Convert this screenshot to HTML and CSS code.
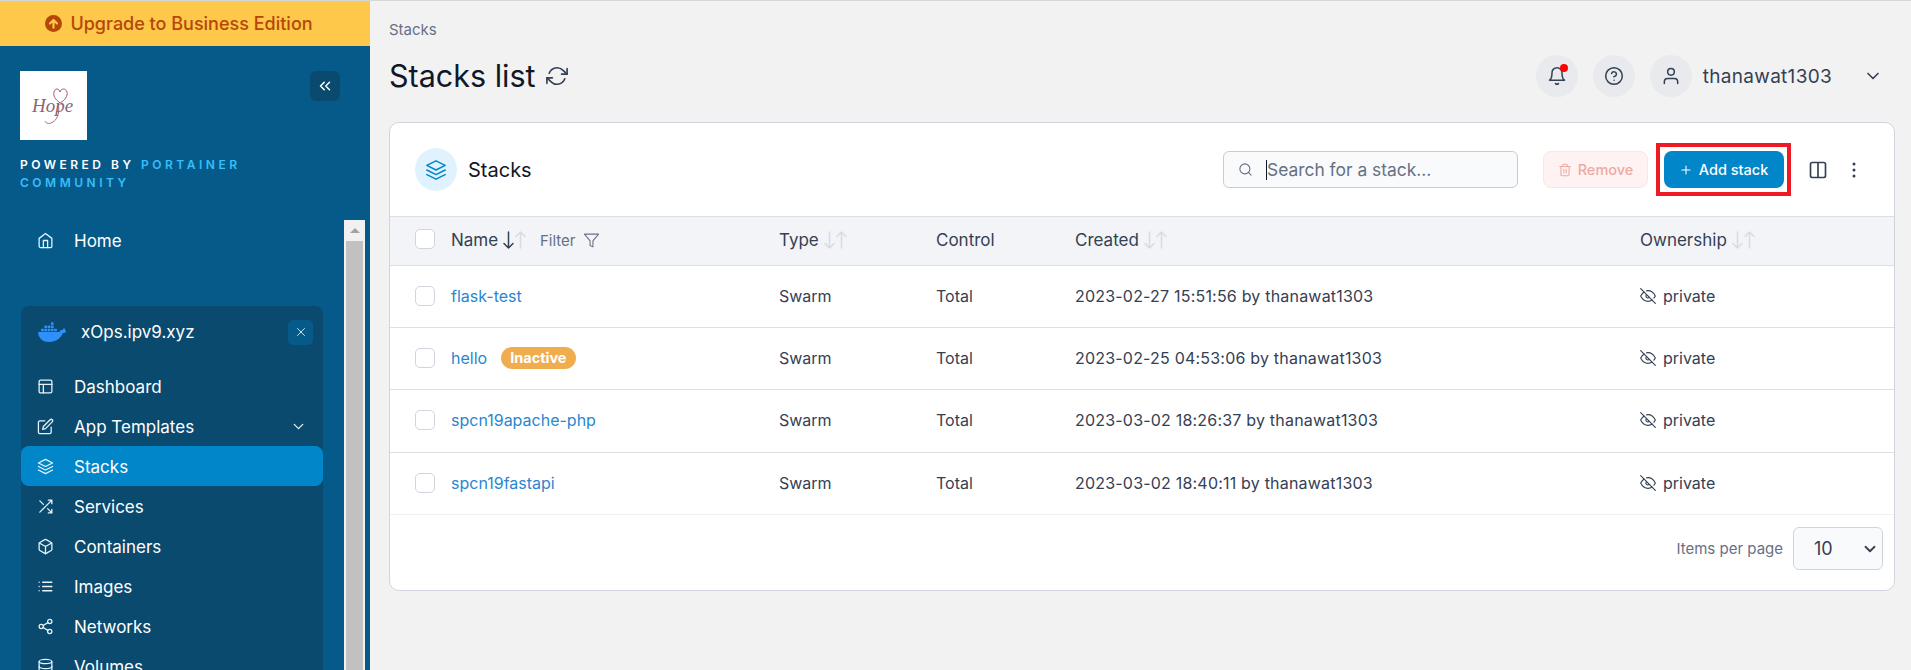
FILE: index.html
```html
<!DOCTYPE html>
<html lang="en">
<head>
<meta charset="utf-8">
<title>Stacks list</title>
<link rel="stylesheet" href="styles.css">
</head>
<body>
<svg class="sprite" width="0" height="0" aria-hidden="true">
  <symbol id="i-home" viewBox="0 0 24 24"><path d="M3 9l9-7 9 7v11a2 2 0 0 1-2 2H5a2 2 0 0 1-2-2z"/><path d="M9 22V12h6v10"/></symbol>
  <symbol id="i-layout" viewBox="0 0 24 24"><rect x="3" y="3" width="18" height="18" rx="2"/><path d="M3 9h18M9 21V9"/></symbol>
  <symbol id="i-edit" viewBox="0 0 24 24"><path d="M11 4H4a2 2 0 0 0-2 2v14a2 2 0 0 0 2 2h14a2 2 0 0 0 2-2v-7"/><path d="M18.5 2.500a2.121 2.121 0 0 1 3 3L12 15l-4 1 1-4 9.500-9.500z"/></symbol>
  <symbol id="i-layers" viewBox="0 0 24 24"><path d="M12 2 2 7l10 5 10-5-10-5z"/><path d="M2 17l10 5 10-5"/><path d="M2 12l10 5 10-5"/></symbol>
  <symbol id="i-shuffle" viewBox="0 0 24 24"><path d="M16 3h5v5M4 20 21 3M21 16v5h-5M15 15l6 6M4 4l5 5"/></symbol>
  <symbol id="i-box" viewBox="0 0 24 24"><path d="M21 16V8a2 2 0 0 0-1-1.730l-7-4a2 2 0 0 0-2 0l-7 4A2 2 0 0 0 3 8v8a2 2 0 0 0 1 1.730l7 4a2 2 0 0 0 2 0l7-4A2 2 0 0 0 21 16z"/><path d="M3.270 6.960 12 12.010l8.730-5.050M12 22.080V12"/></symbol>
  <symbol id="i-list" viewBox="0 0 24 24"><path d="M8 6h13M8 12h13M8 18h13M3 6h.01M3 12h.01M3 18h.01"/></symbol>
  <symbol id="i-share" viewBox="0 0 24 24"><circle cx="18" cy="5" r="3"/><circle cx="6" cy="12" r="3"/><circle cx="18" cy="19" r="3"/><path d="M8.590 13.510l6.830 3.980M15.410 6.510l-6.820 3.980"/></symbol>
  <symbol id="i-db" viewBox="0 0 24 24"><ellipse cx="12" cy="5" rx="9" ry="3"/><path d="M21 12c0 1.660-4 3-9 3s-9-1.340-9-3"/><path d="M3 5v14c0 1.660 4 3 9 3s9-1.340 9-3V5"/></symbol>
  <symbol id="i-refresh" viewBox="0 0 24 24"><path d="M23 4v6h-6M1 20v-6h6"/><path d="M3.510 9a9 9 0 0 1 14.850-3.360L23 10M1 14l4.640 4.360A9 9 0 0 0 20.490 15"/></symbol>
  <symbol id="i-bell" viewBox="0 0 24 24"><path d="M18 8A6 6 0 0 0 6 8c0 7-3 9-3 9h18s-3-2-3-9"/><path d="M13.730 21a2 2 0 0 1-3.460 0"/></symbol>
  <symbol id="i-help" viewBox="0 0 24 24"><circle cx="12" cy="12" r="10"/><path d="M9.090 9a3 3 0 0 1 5.830 1c0 2-3 3-3 3M12 17h.01"/></symbol>
  <symbol id="i-user" viewBox="0 0 24 24"><path d="M20 21v-2a4 4 0 0 0-4-4H8a4 4 0 0 0-4 4v2"/><circle cx="12" cy="7" r="4"/></symbol>
  <symbol id="i-search" viewBox="0 0 24 24"><circle cx="11" cy="11" r="8"/><path d="M21 21l-4.350-4.350"/></symbol>
  <symbol id="i-trash" viewBox="0 0 24 24"><path d="M3 6h18M19 6v14a2 2 0 0 1-2 2H7a2 2 0 0 1-2-2V6m3 0V4a2 2 0 0 1 2-2h4a2 2 0 0 1 2 2v2M10 11v6M14 11v6"/></symbol>
  <symbol id="i-plus" viewBox="0 0 24 24"><path d="M12 5v14M5 12h14"/></symbol>
  <symbol id="i-columns" viewBox="0 0 24 24"><path d="M12 3H5a2 2 0 0 0-2 2v14a2 2 0 0 0 2 2h14a2 2 0 0 0 2-2V5a2 2 0 0 0-2-2h-7zM12 3v18"/></symbol>
  <symbol id="i-filter" viewBox="0 0 24 24"><path d="M22 3H2l8 9.460V19l4 2v-8.540L22 3z"/></symbol>
  <symbol id="i-eyeoff" viewBox="0 0 24 24"><path d="M17.940 17.940A10.070 10.070 0 0 1 12 20c-7 0-11-8-11-8a18.450 18.450 0 0 1 5.060-5.940M9.900 4.240A9.120 9.120 0 0 1 12 4c7 0 11 8 11 8a18.500 18.500 0 0 1-2.160 3.190m-6.720-1.070a3 3 0 1 1-4.240-4.240"/><path d="M1 1l22 22"/></symbol>
  <symbol id="i-chevdown" viewBox="0 0 24 24"><path d="M6 9l6 6 6-6"/></symbol>
  <symbol id="i-sort" viewBox="0 0 11 18"><path d="M5.500 1v16M1 12.500l4.500 4.500 4.500-4.500"/></symbol>
</svg>

<div class="app">
  <aside class="sidebar">
    <a class="upgrade">
      <svg class="up-icon" viewBox="0 0 24 24"><circle cx="12" cy="12" r="12"/><path d="M12 18V7M7 12l5-5 5 5"/></svg>
      <span>Upgrade to Business Edition</span>
    </a>
    <div class="brand">
      <div class="brand-top">
        <div class="logo">
          <svg viewBox="0 0 67 69" width="67" height="69">
            <path class="logo-heart" d="M40 32c-5-4-7-7-6-11 1-4 5-4 6 0 1-4 6-4 7 0 1 4-2 8-7 11z"/>
            <path class="logo-swash" d="M38 32c2 8 0 16-5 19-3 2-7 2-8-1"/>
            <text class="logo-text" x="12" y="41">Hope</text>
          </svg>
        </div>
        <button class="collapse">
          <svg class="ic ic-collapse" viewBox="0 0 24 24"><path d="M11 17l-5-5 5-5M18 17l-5-5 5-5"/></svg>
        </button>
      </div>
      <p class="powered">POWERED BY <span>PORTAINER</span> <span>COMMUNITY</span></p>
    </div>
    <div class="nav-area">
      <nav class="nav">
        <a class="nav-item nav-home"><svg class="ic"><use href="#i-home"/></svg><span>Home</span></a>
        <section class="env">
          <header class="env-head">
            <svg class="docker" viewBox="0 0 28 20">
              <path d="M0 10h21.500c.6-1.700 2-2.600 3.300-2.100.3-1.200 1.100-1.800 1.500-1.900.5.700 1 1.500.8 2.600.6.200 1.300.5 1.200 1-.8 1.200-2.200 1.600-3.500 1.500C22.500 16.500 18 20 11 20 3.500 20 .300 15 0 10z"/>
              <rect x="3" y="6.800" width="2.700" height="2.500"/><rect x="6.300" y="6.800" width="2.700" height="2.500"/><rect x="9.600" y="6.800" width="2.700" height="2.500"/><rect x="12.900" y="6.800" width="2.700" height="2.500"/><rect x="16.200" y="6.800" width="2.700" height="2.500"/>
              <rect x="6.300" y="3.600" width="2.700" height="2.500"/><rect x="9.600" y="3.600" width="2.700" height="2.500"/><rect x="12.900" y="3.600" width="2.700" height="2.500"/>
              <rect x="12.900" y=".4" width="2.700" height="2.500"/>
            </svg>
            <span class="env-name">xOps.ipv9.xyz</span>
            <button class="env-close"><svg class="ic" viewBox="0 0 24 24"><path d="M18 6 6 18M6 6l12 12"/></svg></button>
          </header>
          <a class="nav-item"><svg class="ic"><use href="#i-layout"/></svg><span>Dashboard</span></a>
          <a class="nav-item"><svg class="ic"><use href="#i-edit"/></svg><span>App Templates</span><svg class="ic nav-chev"><use href="#i-chevdown"/></svg></a>
          <a class="nav-item active"><svg class="ic"><use href="#i-layers"/></svg><span>Stacks</span></a>
          <a class="nav-item"><svg class="ic"><use href="#i-shuffle"/></svg><span>Services</span></a>
          <a class="nav-item"><svg class="ic"><use href="#i-box"/></svg><span>Containers</span></a>
          <a class="nav-item"><svg class="ic"><use href="#i-list"/></svg><span>Images</span></a>
          <a class="nav-item"><svg class="ic"><use href="#i-share"/></svg><span>Networks</span></a>
          <a class="nav-item"><svg class="ic"><use href="#i-db"/></svg><span>Volumes</span></a>
        </section>
      </nav>
      <div class="scrollbar"><button class="scroll-btn"></button><div class="scroll-thumb"></div></div>
    </div>
  </aside>

  <main class="main">
    <div class="crumb">Stacks</div>
    <header class="page-head">
      <h1 class="title">Stacks list</h1>
      <svg class="ic ic-refresh"><use href="#i-refresh"/></svg>
      <div class="user-area">
        <span class="round has-dot"><svg class="ic"><use href="#i-bell"/></svg></span>
        <span class="round"><svg class="ic"><use href="#i-help"/></svg></span>
        <span class="round"><svg class="ic"><use href="#i-user"/></svg></span>
        <span class="username">thanawat1303</span>
        <svg class="ic user-chev"><use href="#i-chevdown"/></svg>
      </div>
    </header>

    <section class="card">
      <div class="toolbar">
        <span class="badge-icon"><svg class="ic"><use href="#i-layers"/></svg></span>
        <h2 class="card-title">Stacks</h2>
        <label class="search">
          <svg class="ic"><use href="#i-search"/></svg>
          <span class="caret"></span>
          <span class="placeholder">Search for a stack...</span>
        </label>
        <button class="btn btn-remove"><svg class="ic"><use href="#i-trash"/></svg>Remove</button>
        <span class="highlight"><button class="btn btn-add"><svg class="ic"><use href="#i-plus"/></svg>Add stack</button></span>
        <svg class="ic ic-columns"><use href="#i-columns"/></svg>
        <svg class="dots" viewBox="0 0 4 16"><circle cx="2" cy="2" r="1.500"/><circle cx="2" cy="8" r="1.500"/><circle cx="2" cy="14" r="1.500"/></svg>
      </div>

      <div class="row row-head">
        <span class="check"></span>
        <span class="cell">Name <span class="sort"><svg class="ar on"><use href="#i-sort"/></svg><svg class="ar flip"><use href="#i-sort"/></svg></span><span class="filter">Filter <svg class="ic"><use href="#i-filter"/></svg></span></span>
        <span class="cell">Type <span class="sort"><svg class="ar"><use href="#i-sort"/></svg><svg class="ar flip"><use href="#i-sort"/></svg></span></span>
        <span class="cell">Control</span>
        <span class="cell">Created <span class="sort"><svg class="ar"><use href="#i-sort"/></svg><svg class="ar flip"><use href="#i-sort"/></svg></span></span>
        <span class="cell">Ownership <span class="sort"><svg class="ar"><use href="#i-sort"/></svg><svg class="ar flip"><use href="#i-sort"/></svg></span></span>
      </div>

      <div class="row">
        <span class="check"></span>
        <span class="cell"><a class="link">flask-test</a></span>
        <span class="cell">Swarm</span>
        <span class="cell">Total</span>
        <span class="cell date">2023-02-27 15:51:56 by thanawat1303</span>
        <span class="cell"><svg class="ic ic-eye"><use href="#i-eyeoff"/></svg>private</span>
      </div>
      <div class="row">
        <span class="check"></span>
        <span class="cell"><a class="link">hello</a><span class="inactive">Inactive</span></span>
        <span class="cell">Swarm</span>
        <span class="cell">Total</span>
        <span class="cell date">2023-02-25 04:53:06 by thanawat1303</span>
        <span class="cell"><svg class="ic ic-eye"><use href="#i-eyeoff"/></svg>private</span>
      </div>
      <div class="row row-tall">
        <span class="check"></span>
        <span class="cell"><a class="link">spcn19apache-php</a></span>
        <span class="cell">Swarm</span>
        <span class="cell">Total</span>
        <span class="cell date">2023-03-02 18:26:37 by thanawat1303</span>
        <span class="cell"><svg class="ic ic-eye"><use href="#i-eyeoff"/></svg>private</span>
      </div>
      <div class="row row-tall row-last">
        <span class="check"></span>
        <span class="cell"><a class="link">spcn19fastapi</a></span>
        <span class="cell">Swarm</span>
        <span class="cell">Total</span>
        <span class="cell date">2023-03-02 18:40:11 by thanawat1303</span>
        <span class="cell"><svg class="ic ic-eye"><use href="#i-eyeoff"/></svg>private</span>
      </div>

      <footer class="card-foot">
        <span class="per-page">Items per page</span>
        <span class="select"><span>10</span><svg class="ic"><use href="#i-chevdown"/></svg></span>
      </footer>
    </section>
  </main>
</div>
</body>
</html>
```

FILE: styles.css
```css
* { box-sizing: border-box; }
html, body { margin: 0; padding: 0; height: 670px; overflow: hidden; }
body { font-family: Inter, "Liberation Sans", sans-serif; background: #f2f2f3; color: #344054; border-top: 1px solid #d6d6d6; }
a { text-decoration: none; }
button { font: inherit; border: 0; padding: 0; }
.sprite { position: absolute; }
.ic { width: 16px; height: 16px; fill: none; stroke: currentColor; stroke-width: 2; stroke-linecap: round; stroke-linejoin: round; flex: none; }

.app { display: flex; height: 669px; }

/* sidebar */
.sidebar { width: 370px; flex: none; background: #065a8a; display: flex; flex-direction: column; overflow: hidden; color: #fff; }
.upgrade { height: 45px; background: #fec84b; color: #b54708; font-size: 18px; font-weight: 500; display: flex; align-items: center; justify-content: center; gap: 8px; flex: none; padding-right: 12px; }
.up-icon { width: 17px; height: 17px; }
.up-icon circle { fill: #b54708; }
.up-icon path { fill: none; stroke: #fec84b; stroke-width: 3; stroke-linecap: round; stroke-linejoin: round; }
.brand { padding: 25px 30px 0 20px; flex: none; }
.brand-top { display: flex; justify-content: space-between; align-items: flex-start; }
.logo { width: 67px; height: 69px; background: #fff; display: block; }
.logo svg { display: block; }
.logo-heart { fill: none; stroke: #a5576f; stroke-width: 1; }
.logo-swash { fill: none; stroke: #a56a80; stroke-width: 1; }
.logo-text { font-family: "Liberation Serif", serif; font-style: italic; font-size: 19px; fill: #8d6577; }
.collapse { width: 30px; height: 30px; background: #0b4a6f; border-radius: 6px; color: #fff; display: flex; align-items: center; justify-content: center; }
.ic-collapse { width: 18px; height: 18px; }
.powered { margin: 16px 0 0; font-size: 12px; font-weight: 600; letter-spacing: 3.5px; line-height: 18px; width: 260px; color: #fff; }
.powered span { color: #36bffa; }
.nav-area { display: flex; flex: 1; min-height: 0; margin-top: 28px; }
.nav { width: 344px; padding: 0 0 0 21px; }
.nav-home { margin-bottom: 46px; height: 40px; margin-right: 21px; }
.nav-item { display: flex; align-items: center; gap: 20px; height: 40px; padding: 1px 16px 0; font-size: 17px; color: #fff; border-radius: 8px; }
.nav-item .ic { width: 17px; height: 17px; stroke-width: 1.8; color: #e8f3f9; }
.nav-chev { margin-left: auto; }
.nav-item.active { background: #0086c9; }
.env { width: 302px; background: #0b4a6f; border-radius: 8px 8px 0 0; }
.env-head { height: 60px; display: flex; align-items: center; padding: 0 10px 8px 17px; }
.docker { width: 28px; height: 20px; fill: #2e90fa; flex: none; }
.env-name { font-size: 17px; margin-left: 15px; }
.env-close { margin-left: auto; width: 25px; height: 25px; background: #065a8a; border-radius: 5px; color: #dce9f1; display: flex; align-items: center; justify-content: center; }
.env-close .ic { width: 14px; height: 14px; stroke-width: 1.6; }
.scrollbar { width: 21px; background: #f1f1f1; display: flex; flex-direction: column; align-items: center; }
.scroll-btn { width: 21px; height: 21px; background: #f1f1f1; }
.scroll-btn::after { content: ""; display: block; width: 0; height: 0; border: 5px solid transparent; border-top: 0; border-bottom: 5px solid #a3a3a3; margin: 0 auto; }
.scroll-thumb { width: 17px; flex: 1; background: #c1c1c1; }

/* main */
.main { flex: 1; min-width: 0; padding: 0 16px 0 19px; }
.crumb { font-size: 15px; color: #667085; padding-top: 21px; line-height: 16px; }
.page-head { display: flex; align-items: center; height: 42px; margin-top: 17px; }
.title { margin: 0; font-size: 30.5px; font-weight: 400; color: #101828; line-height: 42px; }
.ic-refresh { width: 22px; height: 22px; margin-left: 10px; color: #344054; stroke-width: 1.8; }
.user-area { margin-left: auto; display: flex; align-items: center; padding-right: 12px; }
.round { width: 42px; height: 42px; border-radius: 50%; background: #e8eaee; display: flex; align-items: center; justify-content: center; margin-right: 15px; color: #344054; position: relative; }
.round .ic { width: 20px; height: 20px; stroke-width: 1.8; }
.round + .round + .round { margin-right: 11px; }
.has-dot::after { content: ""; position: absolute; top: 9px; right: 10px; width: 8px; height: 8px; border-radius: 50%; background: #f00; }
.username { font-size: 19px; color: #344054; letter-spacing: .3px; }
.user-chev { width: 20px; height: 20px; margin-left: 31px; }

.card { margin-top: 25px; background: #fff; border: 1px solid #d0d5dd; border-radius: 10px; height: 469px; overflow: hidden; }
.toolbar { height: 93px; display: flex; align-items: center; padding: 0 38px 0 25px; }
.badge-icon { width: 42px; height: 43px; border-radius: 50%; background: #e0f2fe; color: #0086c9; display: flex; align-items: center; justify-content: center; }
.badge-icon .ic { width: 22px; height: 22px; stroke-width: 1.7; }
.card-title { margin: 0 0 0 11px; font-size: 20px; font-weight: 400; color: #101828; }
.search { margin-left: auto; width: 295px; height: 37px; border: 1px solid #c6ccd6; border-radius: 6px; background: #f9fafb; display: flex; align-items: center; padding-left: 14px; color: #667085; }
.search .ic { width: 15px; height: 15px; stroke-width: 1.8; }
.caret { width: 1px; height: 20px; background: #101828; margin-left: 13px; }
.placeholder { font-size: 17.4px; color: #667085; }
.btn { height: 37px; border-radius: 8px; display: inline-flex; align-items: center; justify-content: center; font-size: 14.5px; font-weight: 500; gap: 6px; }
.btn-remove { width: 105px; margin-left: 25px; background: #fef3f2; border: 1px solid #fee4e2; color: #eda9a3; }
.btn-remove .ic { width: 14px; height: 14px; stroke-width: 1.8; }
.highlight { margin-left: 8px; width: 135px; height: 53px; border: 4px solid #ed1c24; display: flex; align-items: center; justify-content: center; background: #fff; }
.btn-add { width: 120px; background: #0086c9; color: #fff; }
.btn-add .ic { width: 14px; height: 14px; stroke-width: 1.8; }
.ic-columns { width: 20px; height: 20px; margin-left: 17px; color: #344054; }
.dots { width: 4px; height: 16px; margin-left: 24px; fill: #344054; }

.row { display: grid; grid-template-columns: 36px 328px 157px 139px 565px 1fr; align-items: center; height: 62px; border-top: 1px solid #dcdfe5; font-size: 16px; color: #344054; padding: 0 0 2px 25px; }
.row-tall { height: 63px; }
.row-head { height: 49px; background: #f2f4f7; font-size: 17px; }
.row-head .check { margin-bottom: 3px; }
.row-last { border-bottom: 1px solid #f0f1f3; }
.check { width: 20px; height: 20px; border: 1px solid #d0d5dd; border-radius: 5px; background: #fff; }
.cell { display: flex; align-items: center; white-space: pre; }
.date { letter-spacing: .2px; }
.link { color: #2a86cf; }
.inactive { margin-left: 14px; height: 22px; padding: 0 9px; border-radius: 11px; background: #f0ad4e; color: #fff; font-size: 14.5px; font-weight: 700; display: inline-flex; align-items: center; }
.sort { display: inline-flex; margin-left: 0; gap: 1px; }
.ar { width: 11px; height: 18px; fill: none; stroke: #d7dbe2; stroke-width: 1.5; stroke-linecap: round; stroke-linejoin: round; }
.ar.on { stroke: #344054; }
.ar.flip { transform: scaleY(-1); }
.filter { margin-left: 14px; font-size: 15px; color: #667085; display: inline-flex; align-items: center; }
.filter .ic { width: 17px; height: 17px; margin-left: 3px; stroke-width: 1.5; }
.ic-eye { width: 16px; height: 16px; margin-right: 7px; stroke-width: 1.7; color: #344054; }
.card-foot { display: flex; align-items: center; justify-content: flex-end; gap: 10px; padding: 12px 11px 0 0; }
.per-page { font-size: 15px; color: #667085; }
.select { width: 90px; height: 43px; border: 1px solid #d0d5dd; border-radius: 6px; background: #f9fafb; display: flex; align-items: center; justify-content: space-between; padding: 0 3px 0 20px; font-size: 18px; color: #344054; }
.select .ic { width: 18px; height: 18px; stroke-width: 2.4; }
```
